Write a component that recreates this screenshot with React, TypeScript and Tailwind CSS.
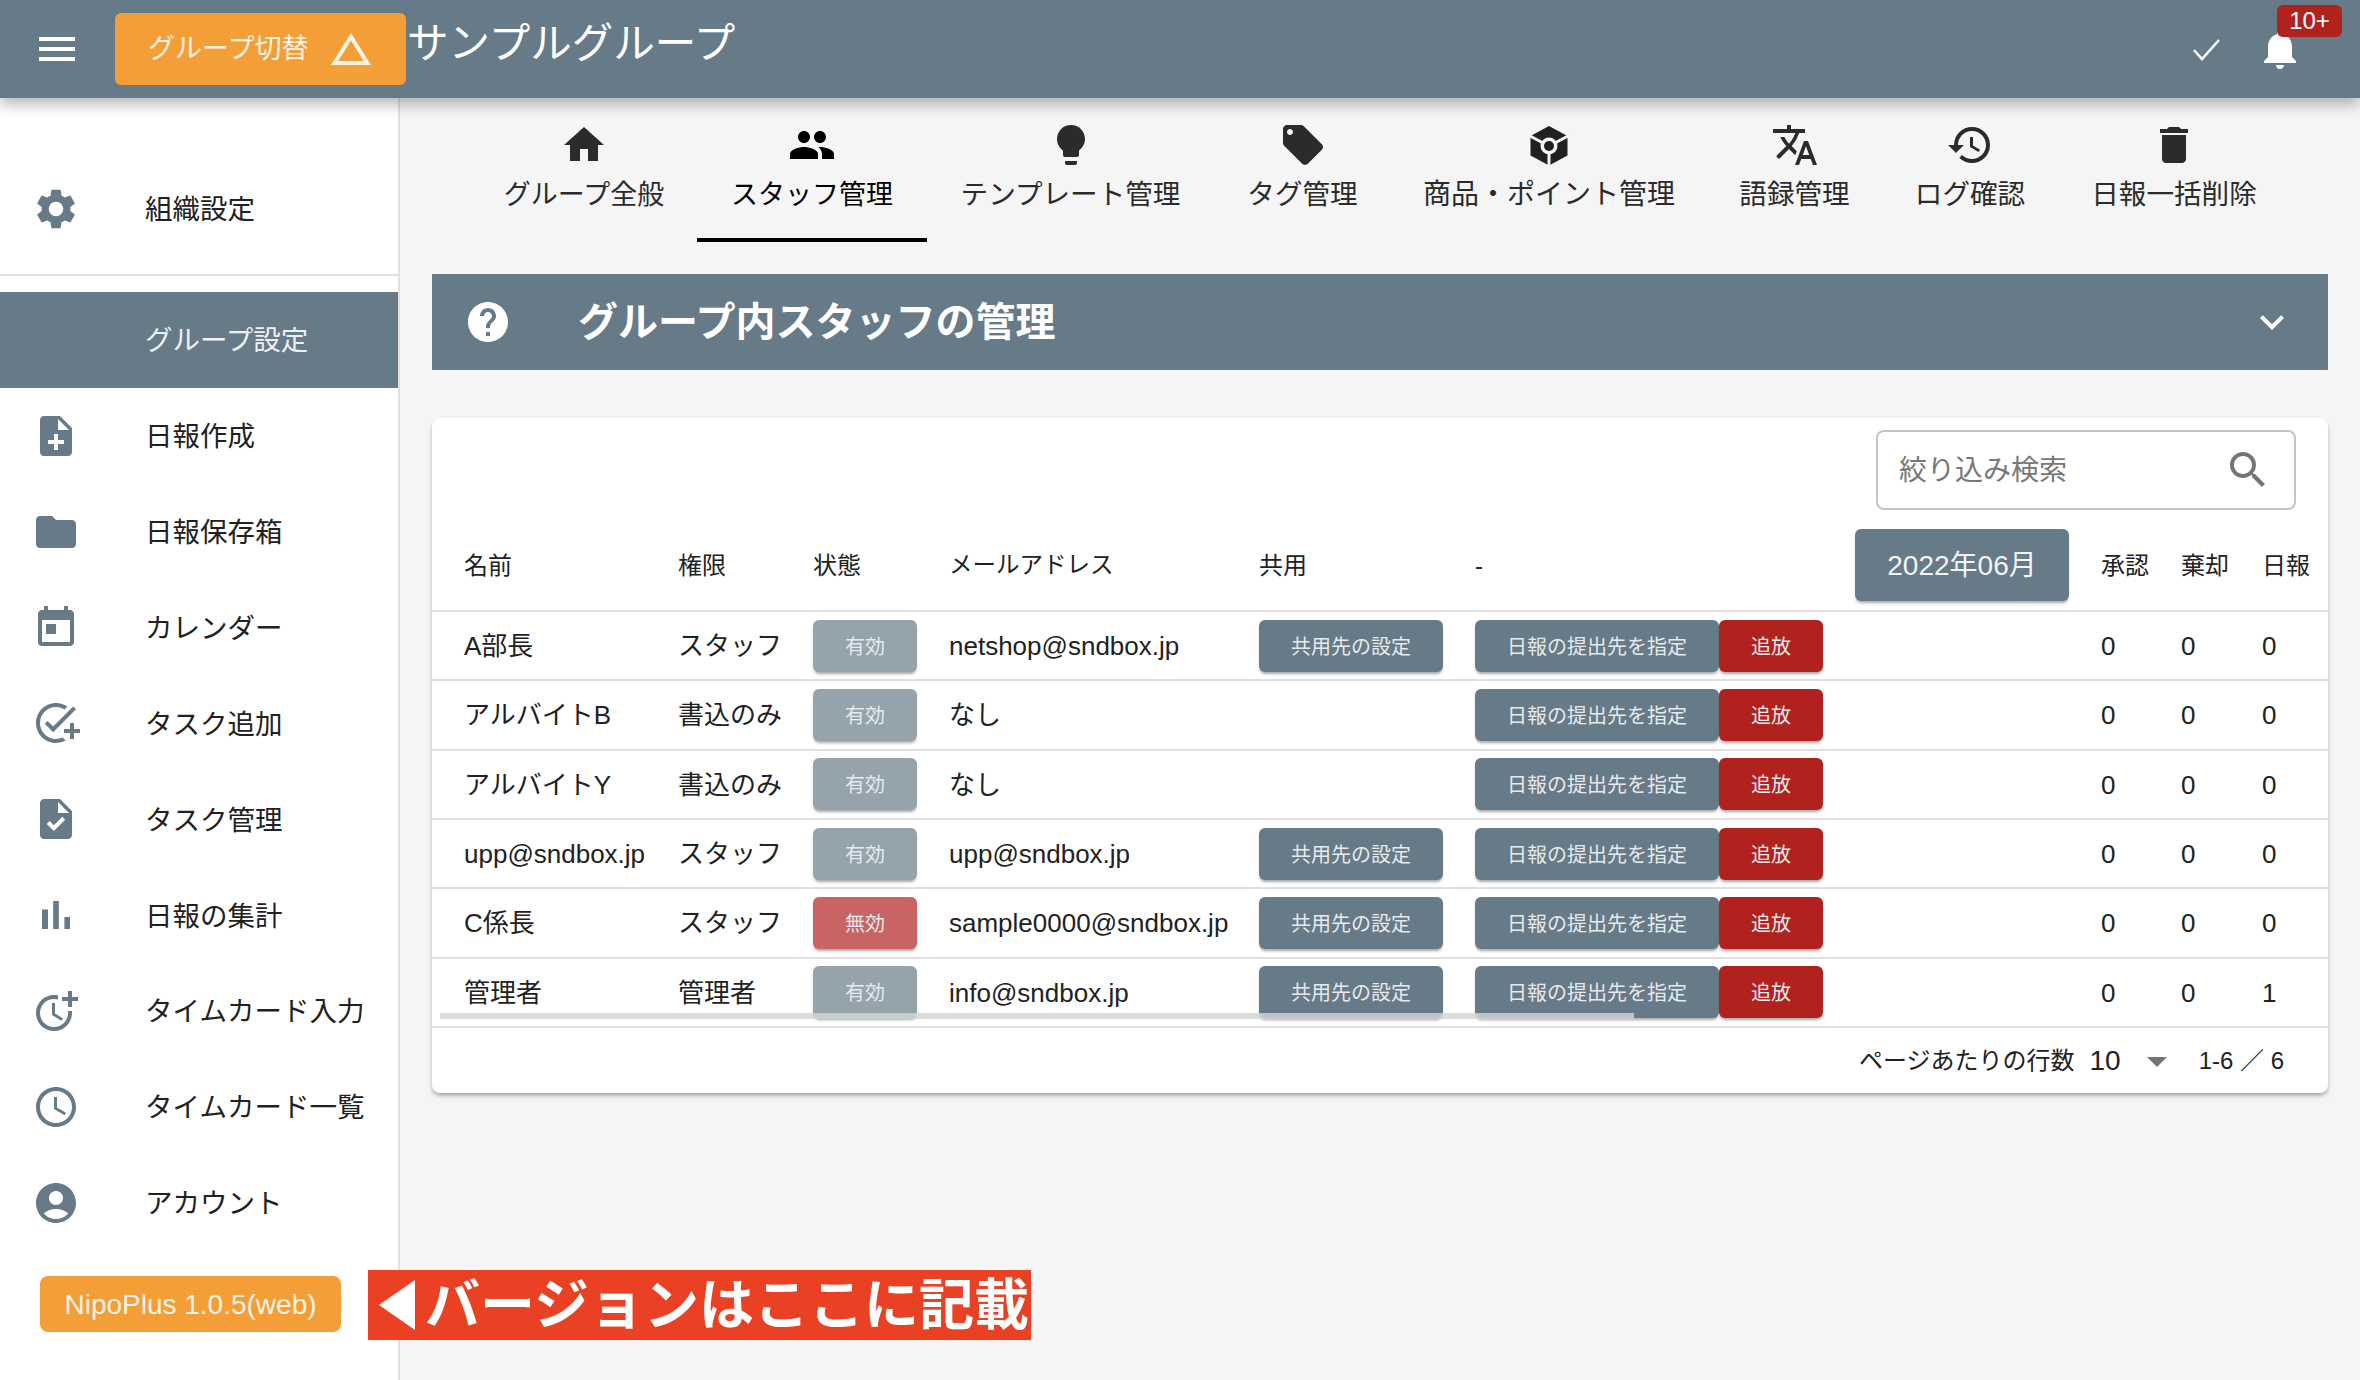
import {
  MdAccessTime,
  MdAccountCircle,
  MdAddTask,
  MdArrowDropDown,
  MdChangeHistory,
  MdDelete,
  MdExpandMore,
  MdFolder,
  MdHelp,
  MdHistory,
  MdHome,
  MdLightbulb,
  MdLocalOffer,
  MdMenu,
  MdMoreTime,
  MdNoteAdd,
  MdNotifications,
  MdPeople,
  MdSearch,
  MdSettings,
  MdTask,
  MdToday,
  MdTranslate,
} from "react-icons/md";

const BoxIcon = () => (
  <svg width="48" height="48" viewBox="0 0 48 48">
    <polygon points="24,5 42.5,15 42.5,34.5 24,44.5 5.5,34.5 5.5,15" fill="#212121" />
    <path d="M4 14.5 L24 25 L44 14.5 M24 25 V46" stroke="#f5f5f5" strokeWidth="3" fill="none" />
    <circle cx="24" cy="25" r="8.5" fill="#f5f5f5" />
    <circle cx="24" cy="25" r="5" fill="#212121" />
  </svg>
);

const BarsIcon = () => (
  <svg width="48" height="48" viewBox="0 0 24 24" fill="currentColor">
    <path d="M5 9.2h3V19H5zM10.6 5h2.8v14h-2.8zM16.2 13H19v6h-2.8z" />
  </svg>
);

const sideItems = [
  { label: "日報作成", icon: <MdNoteAdd size={48} /> },
  { label: "日報保存箱", icon: <MdFolder size={48} /> },
  { label: "カレンダー", icon: <MdToday size={48} /> },
  { label: "タスク追加", icon: <MdAddTask size={48} /> },
  { label: "タスク管理", icon: <MdTask size={48} /> },
  { label: "日報の集計", icon: <BarsIcon /> },
  { label: "タイムカード入力", icon: <MdMoreTime size={48} /> },
  { label: "タイムカード一覧", icon: <MdAccessTime size={48} /> },
  { label: "アカウント", icon: <MdAccountCircle size={48} /> },
];

const tabs = [
  { label: "グループ全般", icon: <MdHome size={48} />, box: "w-[226px] text-[27px]" },
  { label: "スタッフ管理", icon: <MdPeople size={48} />, box: "w-[230px] text-[27px]", active: true },
  { label: "テンプレート管理", icon: <MdLightbulb size={48} />, box: "w-[287px] text-[27.6px]" },
  { label: "タグ管理", icon: <MdLocalOffer size={48} />, box: "w-[177px] text-[27.6px]" },
  { label: "商品・ポイント管理", icon: <BoxIcon />, box: "w-[316px] text-[28px]" },
  { label: "語録管理", icon: <MdTranslate size={48} />, box: "w-[175px] text-[27.6px]" },
  { label: "ログ確認", icon: <MdHistory size={48} />, box: "w-[176px] text-[27.6px]" },
  { label: "日報一括削除", icon: <MdDelete size={48} />, box: "w-[232px] text-[27.6px]" },
];

const staff = [
  { name: "A部長", role: "スタッフ", on: true, mail: "netshop@sndbox.jp", share: true, counts: [0, 0, 0] },
  { name: "アルバイトB", role: "書込のみ", on: true, mail: "なし", share: false, counts: [0, 0, 0] },
  { name: "アルバイトY", role: "書込のみ", on: true, mail: "なし", share: false, counts: [0, 0, 0] },
  { name: "upp@sndbox.jp", role: "スタッフ", on: true, mail: "upp@sndbox.jp", share: true, counts: [0, 0, 0] },
  { name: "C係長", role: "スタッフ", on: false, mail: "sample0000@sndbox.jp", share: true, counts: [0, 0, 0] },
  { name: "管理者", role: "管理者", on: true, mail: "info@sndbox.jp", share: true, counts: [0, 0, 1] },
];

const cols = "grid grid-cols-[214px_135px_136px_310px_216px_626px_80px_81px_1fr] items-center pl-[32px] border-b-2 border-[#e0e0e0]";
const btn = "flex h-[52px] items-center justify-center rounded-[6px] pt-[2px] text-[20px] text-[#e6eaec] shadow-[0_3px_3px_-1px_rgba(0,0,0,0.35)]";

export default function App() {
  return (
    <div className="relative flex h-screen w-full flex-col overflow-hidden bg-white text-[#212121] [font-family:'Liberation_Sans','Noto_Sans_CJK_JP',sans-serif]">
      {/* header */}
      <header className="relative z-10 flex h-[98px] shrink-0 items-center bg-[#667a88] pr-[56px] pl-[33px] text-white shadow-[0_6px_14px_rgba(0,0,0,0.3)]">
        <MdMenu size={48} />
        <button className="ml-[34px] flex h-[72px] w-[291px] items-center rounded-[6px] bg-[#f49e38] pl-[33px] text-[27px] text-[#fdf3e6]">
          グループ切替
          <MdChangeHistory size={48} className="ml-[19px]" />
        </button>
        <div className="mb-[10px] ml-[1px] text-[41.5px]">サンプルグループ</div>
        <svg width="32" height="32" viewBox="0 0 32 32" className="mr-[34px] ml-auto">
          <path d="M4 17 L12 26 L29 7" stroke="#fff" strokeWidth="2.5" fill="none" />
        </svg>
        <div className="relative">
          <MdNotifications size={48} />
          <div className="absolute top-[-20px] left-[21px] flex h-[32px] w-[65px] items-center justify-center rounded-[6px] bg-[#b1221f] text-[24px]">
            10+
          </div>
        </div>
      </header>

      <div className="flex min-h-0 flex-1">
        {/* sidebar */}
        <aside className="flex w-[400px] shrink-0 flex-col border-r-2 border-[#e0e0e0] bg-white pt-[63px] text-[27.5px]">
          <div className="flex h-[96px] items-center pl-[32px]">
            <MdSettings size={48} className="text-[#667a88]" />
            <span className="ml-[65px] pt-[2px]">組織設定</span>
          </div>
          <div className="mt-[17px] h-[2px] bg-[#e0e0e0]" />
          <div className="mt-[16px] flex h-[96px] items-center bg-[#667a88] pt-[2px] pl-[145px] text-[#eef1f3]">グループ設定</div>
          {sideItems.map((item) => (
            <div key={item.label} className="flex h-[95.85px] items-center pl-[32px]">
              <span className="text-[#667a88]">{item.icon}</span>
              <span className="ml-[65px] pt-[2px]">{item.label}</span>
            </div>
          ))}
          <div className="mt-[25px] ml-[40px] flex h-[56px] w-[301px] items-center justify-center rounded-[8px] bg-[#f49e38] pt-[2px] text-[28px] text-[#fdf3e6]">
            NipoPlus 1.0.5(web)
          </div>
        </aside>

        {/* main */}
        <main className="min-w-0 flex-1 bg-[#f5f5f5] px-[32px] pt-[20px]">
          <nav className="flex h-[124px] pl-[39px]">
            {tabs.map((tab) => (
              <div
                key={tab.label}
                className={`flex shrink-0 flex-col items-center border-b-4 pt-[3px] ${tab.box} ${
                  tab.active ? "border-black text-black" : "border-transparent text-[#2b2b2b]"
                }`}
              >
                {tab.icon}
                <span className="pt-[2px] leading-[48px] whitespace-nowrap">{tab.label}</span>
              </div>
            ))}
          </nav>

          <section className="mt-[32px] flex h-[96px] items-center bg-[#667a88] pr-[32px] pl-[32px] text-white">
            <MdHelp size={48} />
            <h1 className="ml-[66px] text-[40px] font-bold">グループ内スタッフの管理</h1>
            <MdExpandMore size={48} className="ml-auto" />
          </section>

          <section className="relative mt-[48px] h-[675px] rounded-[8px] bg-white shadow-[0_3px_5px_-1px_rgba(0,0,0,0.4)]">
            <div className="flex h-[102px] justify-end pt-[12px] pr-[32px]">
              <div className="flex h-[80px] w-[420px] items-center rounded-[8px] border-2 border-[#c4c4c4] pr-[22px] pl-[21px]">
                <input
                  placeholder="絞り込み検索"
                  className="min-w-0 flex-1 bg-transparent pt-[2px] text-[28px] outline-none placeholder:text-[#777777]"
                />
                <MdSearch size={48} className="text-[#757575]" />
              </div>
            </div>

            <div className={`${cols} h-[92px] text-[24px]`}>
              <div className="pt-[2px]">名前</div>
              <div className="pt-[2px]">権限</div>
              <div className="pt-[2px]">状態</div>
              <div className="pt-[2px] text-[23.5px]">メールアドレス</div>
              <div className="pt-[2px]">共用</div>
              <div className="flex items-center justify-between pr-[32px]">
                <span className="pt-[2px]">-</span>
                <div className="flex h-[72px] w-[214px] items-center justify-center rounded-[6px] bg-[#667a88] pt-[2px] text-[28px] text-[#f2f4f5] shadow-[0_3px_3px_-1px_rgba(0,0,0,0.35)]">
                  2022年06月
                </div>
              </div>
              <div className="pt-[2px]">承認</div>
              <div className="pt-[2px]">棄却</div>
              <div className="pt-[2px]">日報</div>
            </div>

            {staff.map((s) => (
              <div key={s.name} className={`${cols} h-[69.33px] text-[26px]`}>
                <div className="pt-[2px]">{s.name}</div>
                <div className="pt-[2px]">{s.role}</div>
                <div className={`${btn} w-[104px] ${s.on ? "bg-[#94a3ac]" : "bg-[#c86464]"}`}>{s.on ? "有効" : "無効"}</div>
                <div className="pt-[2px]">{s.mail}</div>
                <div>{s.share && <div className={`${btn} w-[184px] bg-[#667a88]`}>共用先の設定</div>}</div>
                <div className="flex">
                  <div className={`${btn} w-[244px] bg-[#667a88]`}>日報の提出先を指定</div>
                  <div className={`${btn} w-[104px] bg-[#b1221f]`}>追放</div>
                </div>
                {s.counts.map((c, i) => (
                  <div key={i} className="pt-[2px]">
                    {c}
                  </div>
                ))}
              </div>
            ))}

            {/* table scrollbar */}
            <div className="absolute top-[595px] left-[8px] h-[6px] w-[1194px] bg-[rgba(212,212,212,0.82)]" />

            <div className="flex h-[65px] items-center justify-end pt-[2px] pr-[44px] text-[24px]">
              <span>ページあたりの行数</span>
              <span className="ml-[15px] text-[28px]">10</span>
              <MdArrowDropDown size={48} className="ml-[12px] text-[#757575]" />
              <span className="ml-[18px]">1-6 ／ 6</span>
            </div>
          </section>
        </main>
      </div>

      {/* annotation */}
      <div className="absolute top-[1270px] left-[368px] flex h-[70px] w-[663px] items-center bg-[#ea4125] pl-[11px] text-[55px] leading-none font-bold whitespace-nowrap text-white">
        <svg width="36" height="50" viewBox="0 0 36 50" className="mr-[10px] shrink-0">
          <polygon points="36,0 36,50 0,25" fill="#fff" />
        </svg>
        バージョンはここに記載
      </div>
    </div>
  );
}
